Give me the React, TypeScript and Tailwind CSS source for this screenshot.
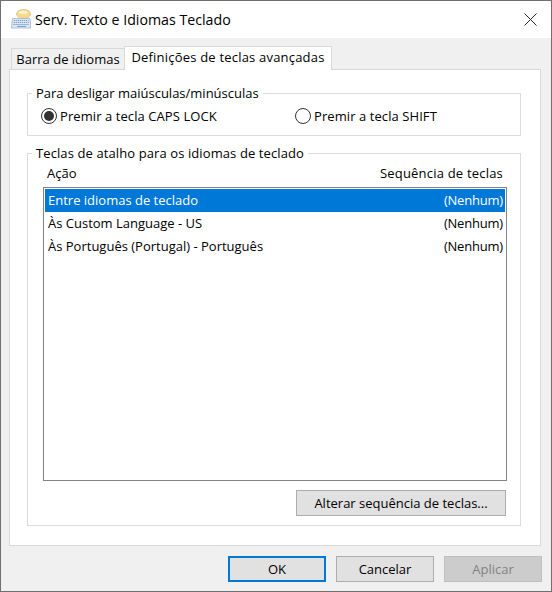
import React from "react";

const rows = [
  { action: "Entre idiomas de teclado", keys: "(Nenhum)", selected: true },
  { action: "Às Custom Language - US", keys: "(Nenhum)", selected: false },
  { action: "Às Português (Portugal) - Português", keys: "(Nenhum)", selected: false },
];

const KeyboardIcon = () => (
  <svg width="20" height="20" viewBox="0 0 20 20">
    {/* speech bubble */}
    <ellipse cx="12.5" cy="5" rx="7" ry="4.5" fill="#f6d98c" stroke="#d8bc80" strokeWidth="0.8" />
    <path d="M8 8 L8 11.5 L12 9 Z" fill="#f6d98c" />
    <ellipse cx="12" cy="3.4" rx="4.5" ry="1.6" fill="#fdf3cf" />
    {/* keyboard */}
    <path d="M1.5 9.5 H19 L20 19 H0.5 Z" fill="#dce7f3" stroke="#9fb4cf" strokeWidth="0.8" />
    <path d="M3 11.5 H17.5 M2.7 13.5 H17.8 M2.4 15.5 H18" stroke="#7a9cc8" strokeWidth="1" strokeDasharray="1.3 0.7" />
    <path d="M6 17.4 H15" stroke="#7a9cc8" strokeWidth="1" />
  </svg>
);

const Radio = ({ checked, label }: { checked?: boolean; label: string }) => (
  <div className="flex items-center gap-[3px]">
    <div className="w-4 h-4 rounded-full border border-[#333333] bg-white flex items-center justify-center">
      {checked && <div className="w-2.5 h-2.5 rounded-full bg-[#333333]" />}
    </div>
    <span className="tracking-[0.08px]">{label}</span>
  </div>
);

const DialogButton = ({ label, className }: { label: string; className: string }) => (
  <div className={`h-[26px] flex items-center justify-center border ${className}`}>{label}</div>
);

export default function App() {
  return (
    <div
      className="w-[552px] h-[592px] border border-[#6f6f6f] bg-[#f0f0f0] flex flex-col overflow-hidden text-[13px] leading-[18px] text-black"
      style={{ fontFamily: '"Open Sans", "Noto Sans", sans-serif' }}
    >
      {/* Title bar */}
      <div className="h-[37px] shrink-0 bg-white flex items-center pl-[10px] pr-[14px]">
        <div className="-mt-[1px] flex">
          <KeyboardIcon />
        </div>
        <span className="ml-[4px] text-[14.2px]">Serv. Texto e Idiomas Teclado</span>
        <svg className="ml-auto" width="13" height="13" viewBox="0 0 13 13">
          <path d="M0.5 0.5 L12.5 12.5 M12.5 0.5 L0.5 12.5" stroke="#222222" strokeWidth="1" fill="none" />
        </svg>
      </div>

      {/* Tabs */}
      <div className="h-[31px] shrink-0 flex items-end pl-[10px] relative z-10">
        <div className="h-[22px] w-[114px] mb-[-1px] border border-[#d9d9d9] bg-[#f0f0f0] flex items-center justify-center">
          Barra de idiomas
        </div>
        <div className="h-[24px] w-[208px] mb-[-1px] -ml-px border border-b-0 border-[#d9d9d9] bg-white flex items-start justify-center pt-[1px] tracking-[0.2px]">
          Definições de teclas avançadas
        </div>
      </div>

      {/* Tab panel */}
      <div className="ml-[8px] w-[532px] h-[477px] shrink-0 border border-[#d9d9d9] bg-white pl-[17px] pr-[19px] pt-[14px]">
        <fieldset className="border border-[#dcdcdc] h-[52px] pl-[13px] pr-[13px]">
          <legend className="px-[4px] -ml-[9px]">Para desligar maiúsculas/minúsculas</legend>
          <div className="flex mt-[5px]">
            <div className="w-[254px]">
              <Radio checked label="Premir a tecla CAPS LOCK" />
            </div>
            <Radio label="Premir a tecla SHIFT" />
          </div>
        </fieldset>

        <fieldset className="mt-[8px] border border-[#dcdcdc] h-[382px] pl-[15px] pr-[13px]">
          <legend className="px-[4px] -ml-[11px] tracking-[0.1px]">Teclas de atalho para os idiomas de teclado</legend>
          <div className="flex justify-between pl-[4px] pr-[4px] h-[25px] pt-[2px]">
            <span>Ação</span>
            <span className="tracking-[0.2px]">Sequência de teclas</span>
          </div>
          <div className="h-[294px] border border-[#82828a] p-px">
            {rows.map((row) => (
              <div
                key={row.action}
                className={`h-[23px] flex items-center justify-between pl-[3px] pr-[2px] pb-[2px] ${
                  row.selected ? "bg-[#0078d7] text-white" : ""
                }`}
              >
                <span>{row.action}</span>
                <span className="tracking-[-0.2px]">{row.keys}</span>
              </div>
            ))}
          </div>
          <div className="flex justify-end mt-[9px] mr-px">
            <DialogButton label="Alterar sequência de teclas..." className="w-[210px] bg-[#e1e1e1] border-[#adadad]" />
          </div>
        </fieldset>
      </div>

      {/* Footer buttons */}
      <div className="flex justify-end gap-[10px] pt-[10px] pr-[9px]">
        <DialogButton label="OK" className="w-[98px] bg-[#e1e1e1] border-2 border-[#0078d7]" />
        <DialogButton label="Cancelar" className="w-[98px] bg-[#e1e1e1] border-[#adadad]" />
        <DialogButton label="Aplicar" className="w-[98px] bg-[#cccccc] border-[#bfbfbf] text-[#838383]" />
      </div>
    </div>
  );
}
